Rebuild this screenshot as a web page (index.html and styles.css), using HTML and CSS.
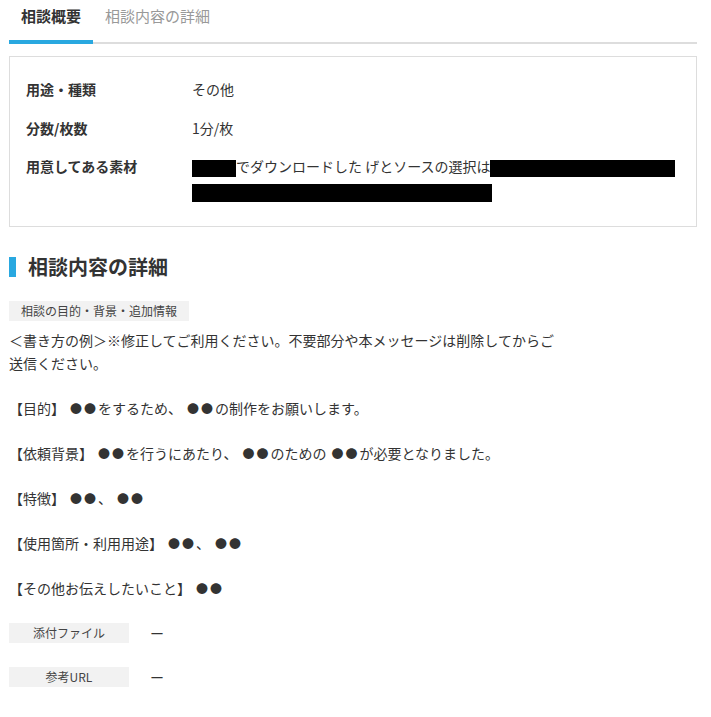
FILE: index.html
```html
<!DOCTYPE html>
<html lang="ja">
<head>
<meta charset="utf-8">
<title>相談概要</title>
<link rel="stylesheet" href="styles.css">
</head>
<body>
<div class="page">
  <nav class="tabs">
    <a class="tab is-active">相談概要</a>
    <a class="tab">相談内容の詳細</a>
  </nav>

  <section class="summary">
    <div class="summary-row">
      <div class="summary-label">用途・種類</div>
      <div class="summary-value">その他</div>
    </div>
    <div class="summary-row">
      <div class="summary-label">分数/枚数</div>
      <div class="summary-value">1分/枚</div>
    </div>
    <div class="summary-row">
      <div class="summary-label">用意してある素材</div>
      <div class="summary-value"><span class="redact redact-a"></span>でダウンロードした げとソースの選択は<span class="redact redact-b"></span><br><span class="redact redact-c"></span></div>
    </div>
  </section>

  <h2 class="section-title">相談内容の詳細</h2>

  <div class="detail">
    <span class="tag">相談の目的・背景・追加情報</span>
    <p class="detail-text">＜書き方の例＞※修正してご利用ください。不要部分や本メッセージは削除してからご送信ください。

【目的】<span class="mark">●●</span>をするため、<span class="mark">●●</span>の制作をお願いします。

【依頼背景】<span class="mark">●●</span>を行うにあたり、<span class="mark">●●</span>のための<span class="mark">●●</span>が必要となりました。

【特徴】<span class="mark">●●</span>、<span class="mark">●●</span>

【使用箇所・利用用途】<span class="mark">●●</span>、<span class="mark">●●</span>

【その他お伝えしたいこと】<span class="mark">●●</span></p>
  </div>

  <div class="meta-row">
    <span class="tag tag-fixed">添付ファイル</span>
    <span class="meta-value">ー</span>
  </div>
  <div class="meta-row">
    <span class="tag tag-fixed">参考URL</span>
    <span class="meta-value">ー</span>
  </div>
</div>
</body>
</html>
```

FILE: styles.css
```css
* {
  box-sizing: border-box;
}

body {
  margin: 0;
  background: #fff;
  color: #333;
  font-family: "Noto Sans CJK JP", "Noto Sans", sans-serif;
}

.page {
  padding: 0 14px 0 9px;
}

/* tab bar */
.tabs {
  display: flex;
  border-bottom: 2px solid #ddd;
}

.tab {
  display: block;
  padding: 6px 12px 14px;
  font-size: 15px;
  line-height: 20px;
  color: #999;
  margin-bottom: -2px;
  border-bottom: 4px solid transparent;
  height: 44px;
}

.tab.is-active {
  color: #333;
  font-weight: 700;
  border-bottom-color: #29a8e0;
}

/* summary box */
.summary {
  margin-top: 12px;
  border: 1px solid #ddd;
  padding: 20px 16px 22px 16px;
  display: flex;
  flex-direction: column;
  gap: 13.5px;
}

.summary-row {
  display: grid;
  grid-template-columns: 166px 1fr;
  font-size: 14px;
  line-height: 25px;
}

.summary-label {
  font-weight: 700;
}

.redact {
  display: inline-block;
  background: #000;
  height: 17px;
  vertical-align: middle;
}

.redact-a { width: 44px; }
.redact-b { width: 185px; }
.redact-c { width: 300px; height: 18px; }

/* section heading */
.section-title {
  margin: 28px 0 0;
  display: flex;
  align-items: center;
  gap: 12px;
  font-size: 20px;
  line-height: 24px;
  font-weight: 700;
}

.section-title::before {
  content: "";
  width: 7px;
  height: 20px;
  background: #29a8e0;
}

/* detail text */
.detail {
  margin-top: 18px;
}

.tag {
  display: inline-block;
  background: #f2f2f2;
  color: #444;
  font-size: 12px;
  line-height: 20px;
  height: 20px;
  padding: 0 12px;
}

.detail-text {
  margin: 8px 0 0;
  max-width: 552px;
  white-space: pre-line;
  font-size: 14px;
  line-height: 22.5px;
}

/* placeholder dots, a touch smaller and spaced out */
.mark {
  font-size: 12px;
  line-height: 1;
  letter-spacing: 2px;
  margin-left: 5px;
}

.meta-row {
  display: flex;
  align-items: center;
  gap: 21px;
  margin-top: 24px;
}

.meta-row + .meta-row {
  margin-top: 24px;
}

.tag-fixed {
  width: 120px;
  text-align: center;
  padding: 0;
}

.meta-value {
  font-size: 14px;
  line-height: 20px;
}
```
